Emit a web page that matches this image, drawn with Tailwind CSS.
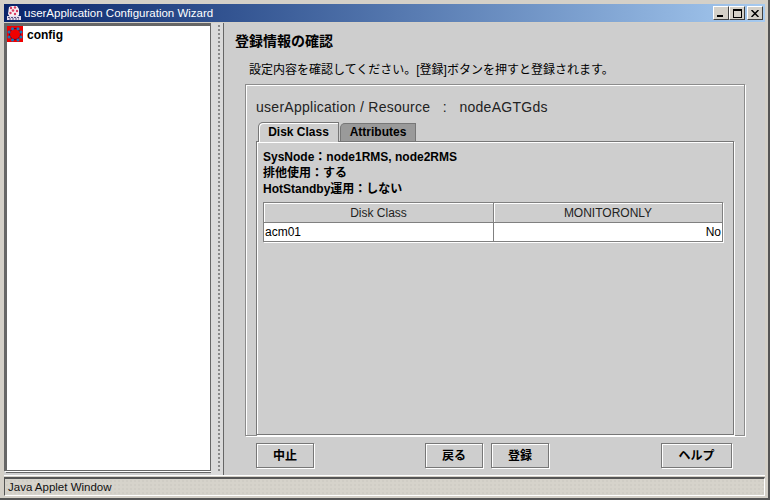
<!DOCTYPE html>
<html lang="ja"><head><meta charset="utf-8"><script src="https://cdn.jsdelivr.net/npm/@tailwindcss/browser@4"></script></head>
<body class="m-0 overflow-hidden">
<div class="w-[770px] h-[500px] bg-[#d4d0c8] flex flex-col pt-[4px] pl-[4px] pr-[3px] pb-[2px] border-r-2 border-b-2 border-[#555555] font-['Liberation_Sans','Noto_Sans_CJK_JP',sans-serif] text-black overflow-hidden">
  <!-- title bar -->
  <div class="h-[18px] shrink-0 flex items-center bg-gradient-to-r from-[#0a246a] to-[#a6caf0] pl-[2px] pr-[2px]">
    <svg width="16" height="16" viewBox="0 0 16 16" class="shrink-0"><path d="M3 2l3-1 5 0 2 3 0 6-2 2-7 0-2-3z" fill="#f8eef2"/><g fill="#d83a60"><circle cx="5" cy="3" r="1.2"/><circle cx="9" cy="2.5" r="1.2"/><circle cx="7" cy="5.5" r="1.3"/><circle cx="11" cy="6" r="1.2"/><circle cx="4.5" cy="8" r="1.2"/><circle cx="9" cy="9" r="1.2"/></g><path d="M1 11h14l0 4H1z" fill="#e4dcec"/><path d="M2 12.5h12M3 14h10" stroke="#5a5280" stroke-dasharray="2 1"/></svg>
    <span class="ml-[2px] text-[11.5px] leading-[16px] text-white whitespace-nowrap">userApplication Configuration Wizard</span>
    <div class="ml-auto flex items-center">
      <div class="w-[16px] h-[14px] bg-[#d4d0c8] border-t border-l border-white border-r border-b border-r-[#404040] border-b-[#404040] flex items-end justify-start pl-[3px] pb-[2px]"><div class="w-[6px] h-[2px] bg-black"></div></div>
      <div class="w-[16px] h-[14px] bg-[#d4d0c8] border-t border-l border-white border-r border-b border-r-[#404040] border-b-[#404040] flex items-center justify-center"><div class="w-[9px] h-[9px] border border-black border-t-2"></div></div>
      <div class="ml-[2px] w-[16px] h-[14px] bg-[#d4d0c8] border-t border-l border-white border-r border-b border-r-[#404040] border-b-[#404040] flex items-center justify-center"><svg width="8" height="7" viewBox="0 0 8 7"><path d="M0.5 0L7.5 7M7.5 0L0.5 7" stroke="#000" stroke-width="1.5"/></svg></div>
    </div>
  </div>
  <!-- body -->
  <div class="flex-1 min-h-0 flex bg-[#cecece] border-t border-[#d4d0c8] border-b border-b-white">
    <!-- tree -->
    <div class="w-[207px] shrink-0 bg-white border-t-[3px] border-l-[3px] border-[#666666] border-r border-b-[1px] border-r-[#666666] border-b-[#666666] shadow-[1px_1px_0_#fff,2px_2px_0_#666666] mb-[4px]">
      <div class="flex items-start h-[16px]">
        <svg width="16" height="16" viewBox="0 0 16 16" class="shrink-0"><rect width="16" height="16" fill="#f00000"/><circle cx="8" cy="8" r="5.5" fill="none" stroke="#600030" stroke-width="1"/><g fill="#1878b8"><circle cx="5.5" cy="2.8" r="1.5"/><circle cx="11" cy="2.8" r="1.5"/><circle cx="14" cy="6" r="1.5"/><circle cx="14" cy="11" r="1.5"/><circle cx="2" cy="6" r="1.5"/><circle cx="2" cy="11" r="1.5"/><circle cx="5.5" cy="14" r="1.5"/><circle cx="11" cy="14" r="1.5"/></g></svg>
        <span class="ml-[4px] mt-[1px] text-[12px] font-bold leading-[16px]">config</span>
      </div>
    </div>
    <!-- divider -->
    <div class="w-[12px] shrink-0 flex justify-center bg-[#dadada] pl-[3px] ml-0 pt-[1px] pb-[2px]"><div class="w-[4px] h-full bg-[radial-gradient(circle,#8a8a8a_0.8px,transparent_1.1px)] bg-[length:4px_4px]"></div></div>
    <!-- right panel -->
    <div class="flex-1 min-w-0 border-l border-[#666666] flex flex-col pl-[21px] pr-[20px]">
      <div class="pt-[9px] -ml-[10px] text-[14px] font-bold leading-[18px] whitespace-nowrap">登録情報の確認</div>
      <div class="mt-[12px] ml-[4px] text-[12px] leading-[16px] whitespace-nowrap">設定内容を確認してください。[登録]ボタンを押すと登録されます。</div>
      <!-- group -->
      <div class="mt-[6px] h-[352px] border border-[#8c8c8c] shadow-[1px_1px_0_#fff,inset_1px_1px_0_#fff] flex flex-col px-[10px]">
        <div class="pt-[14px] text-[14px] leading-[17px] text-[#222] tracking-[0.27px] whitespace-nowrap">userApplication / Resource &nbsp;&nbsp;:&nbsp;&nbsp; nodeAGTGds</div>
        <div class="flex items-end h-[20px] mt-[5px] pl-[2px]">
          <div class="relative z-10 w-[81px] h-[20px] -mb-px bg-[#cecece] border border-b-0 border-[#777] rounded-tl-[5px] shadow-[inset_1px_1px_0_#fff] text-[12px] font-bold text-center leading-[19px]">Disk Class</div>
          <div class="w-[76px] h-[18px] ml-[1px] bg-[#9a9a9a] border border-b-0 border-[#777] rounded-tl-[5px] text-[12px] font-bold text-center leading-[17px]">Attributes</div>
        </div>
        <div class="w-[478px] flex-1 min-h-0 border border-[#777] shadow-[inset_1px_1px_0_#fff,1px_1px_0_#fff] px-[6px] pt-[7px]">
          <div class="text-[12px] font-bold leading-[16px] whitespace-nowrap">SysNode：node1RMS, node2RMS</div>
          <div class="text-[12px] font-bold leading-[16px] whitespace-nowrap">排他使用：する</div>
          <div class="text-[12px] font-bold leading-[16px] whitespace-nowrap">HotStandby運用：しない</div>
          <div class="mt-[5px] w-[460px] border border-[#808080] shadow-[1px_1px_0_#fff] grid grid-cols-[230px_1fr] text-[12px]">
            <div class="h-[20px] border-r border-b border-[#808080] shadow-[inset_1px_1px_0_#fff] text-center leading-[21px] text-[#222]">Disk Class</div>
            <div class="h-[20px] border-b border-[#808080] shadow-[inset_1px_1px_0_#fff] text-center leading-[21px] text-[#222]">MONITORONLY</div>
            <div class="h-[18px] bg-white border-r border-[#808080] pl-[1px] leading-[19px]">acm01</div>
            <div class="h-[18px] bg-white text-right pr-[1px] leading-[19px]">No</div>
          </div>
        </div>
      </div>
      <!-- buttons -->
      <div class="flex mt-[7px] ml-[11px] text-[12px] font-bold">
        <div class="w-[58px] h-[25px] border border-[#777] shadow-[inset_1px_1px_0_#fff,1px_1px_0_#fff] text-center leading-[24px]">中止</div>
        <div class="ml-[111px] w-[58px] h-[25px] border border-[#777] shadow-[inset_1px_1px_0_#fff,1px_1px_0_#fff] text-center leading-[24px]">戻る</div>
        <div class="ml-[8px] w-[58px] h-[25px] border border-[#777] shadow-[inset_1px_1px_0_#fff,1px_1px_0_#fff] text-center leading-[24px]">登録</div>
        <div class="ml-[112px] w-[71px] h-[25px] border border-[#777] shadow-[inset_1px_1px_0_#fff,1px_1px_0_#fff] text-center leading-[24px]">ヘルプ</div>
      </div>
    </div>
  </div>
  <!-- status -->
  <div class="h-[19px] mt-[1px] shrink-0 bg-[#d6d3cb] bg-[radial-gradient(#c8c6be_0.6px,transparent_0.8px)] bg-[length:4px_4px] border-t-2 border-l border-[#555] border-r border-r-white border-b border-b-white text-[11.5px] leading-[17px] pl-[3px] text-[#111]">Java Applet Window</div>
</div>
</body></html>
